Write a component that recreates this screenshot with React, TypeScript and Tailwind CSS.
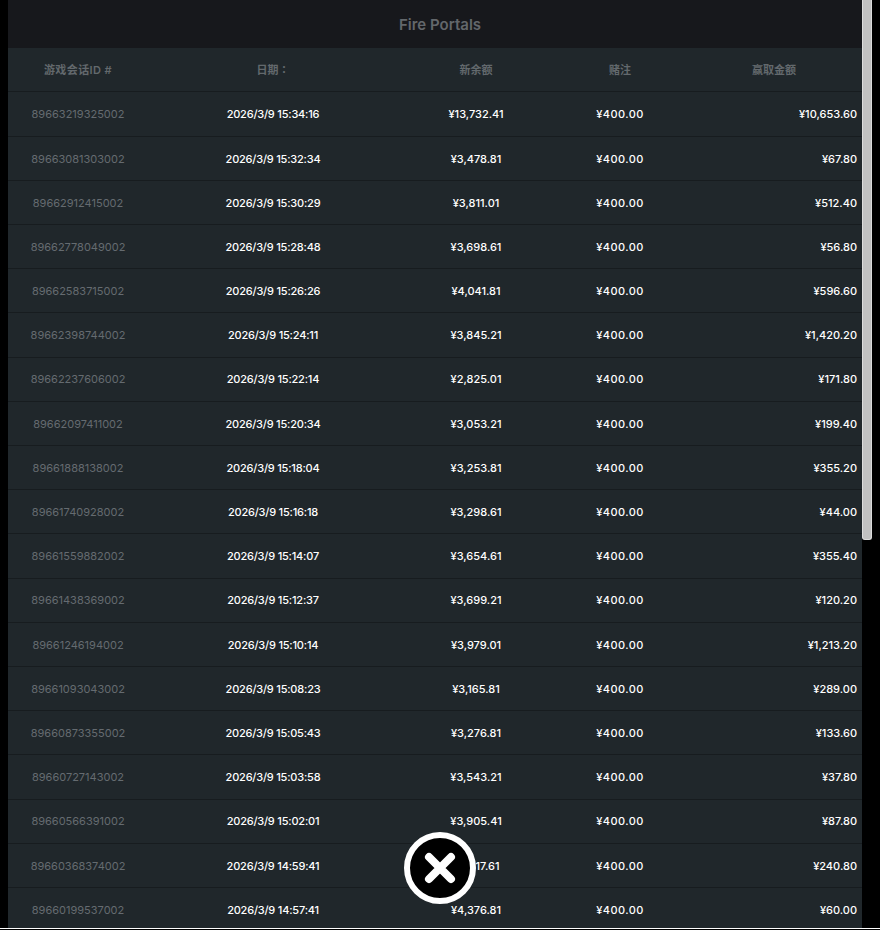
import { useMemo } from "react";

const rows = [
  ["89663219325002", "2026/3/9 15:34:16", "¥13,732.41", "¥400.00", "¥10,653.60"],
  ["89663081303002", "2026/3/9 15:32:34", "¥3,478.81", "¥400.00", "¥67.80"],
  ["89662912415002", "2026/3/9 15:30:29", "¥3,811.01", "¥400.00", "¥512.40"],
  ["89662778049002", "2026/3/9 15:28:48", "¥3,698.61", "¥400.00", "¥56.80"],
  ["89662583715002", "2026/3/9 15:26:26", "¥4,041.81", "¥400.00", "¥596.60"],
  ["89662398744002", "2026/3/9 15:24:11", "¥3,845.21", "¥400.00", "¥1,420.20"],
  ["89662237606002", "2026/3/9 15:22:14", "¥2,825.01", "¥400.00", "¥171.80"],
  ["89662097411002", "2026/3/9 15:20:34", "¥3,053.21", "¥400.00", "¥199.40"],
  ["89661888138002", "2026/3/9 15:18:04", "¥3,253.81", "¥400.00", "¥355.20"],
  ["89661740928002", "2026/3/9 15:16:18", "¥3,298.61", "¥400.00", "¥44.00"],
  ["89661559882002", "2026/3/9 15:14:07", "¥3,654.61", "¥400.00", "¥355.40"],
  ["89661438369002", "2026/3/9 15:12:37", "¥3,699.21", "¥400.00", "¥120.20"],
  ["89661246194002", "2026/3/9 15:10:14", "¥3,979.01", "¥400.00", "¥1,213.20"],
  ["89661093043002", "2026/3/9 15:08:23", "¥3,165.81", "¥400.00", "¥289.00"],
  ["89660873355002", "2026/3/9 15:05:43", "¥3,276.81", "¥400.00", "¥133.60"],
  ["89660727143002", "2026/3/9 15:03:58", "¥3,543.21", "¥400.00", "¥37.80"],
  ["89660566391002", "2026/3/9 15:02:01", "¥3,905.41", "¥400.00", "¥87.80"],
  ["89660368374002", "2026/3/9 14:59:41", "¥3,917.61", "¥400.00", "¥240.80"],
  ["89660199537002", "2026/3/9 14:57:41", "¥4,376.81", "¥400.00", "¥60.00"],
];

const gridCols = "grid grid-cols-[140px_250px_156px_132px_176px]";

const App = () => {
  const data = useMemo(() => rows, []);

  return (
    <div className="relative h-[930px] w-[880px] overflow-hidden bg-black font-['Inter','Noto_Sans_CJK_SC',sans-serif]">
      <div className="flex h-[928px] pl-2">
        <div className="w-[854px] overflow-hidden bg-[#20272b]">
          <div className="flex h-12 items-center justify-center bg-[#17181c] pl-[10px] pt-[3px] text-[15px] font-semibold text-[#63676b]">
            Fire Portals
          </div>
          <div className={`${gridCols} h-11 items-center border-b border-[#171c1f] pt-px text-center text-[11px] font-semibold text-[#63696d]`}>
            <div className="tracking-[0.4px]">游戏会话ID #</div>
            <div className="font-['Inter','Noto_Sans_CJK_TC',sans-serif]">日期：</div>
            <div>新余额</div>
            <div>赌注</div>
            <div>赢取金额</div>
          </div>
          {data.map((r, i) => (
            <div
              key={r[0]}
              className={`${gridCols} ${i === 0 ? "h-[44.7px]" : "h-[44.2px]"} items-center border-b border-[#171c1f] pt-px text-center text-[11px] font-medium text-white`}
            >
              <div className="font-normal text-[#656b70]">{r[0]}</div>
              <div className="tracking-[-0.2px]">{r[1]}</div>
              <div>{r[2]}</div>
              <div className="tracking-[0.4px]">{r[3]}</div>
              <div className="pr-[5px] text-right">{r[4]}</div>
            </div>
          ))}
        </div>
        <div className="w-[10px]">
          <div className="h-[540px] rounded-b-[3px] border-x border-b border-[#dcdcdc] bg-[#c1c1c1]" />
        </div>
      </div>
      <div className="h-px bg-white" />
      <button className="absolute left-[404px] top-[832px] flex h-[72px] w-[72px] items-center justify-center rounded-full border-[6px] border-white bg-black">
        <svg width="34" height="34" viewBox="0 0 34 34" fill="none">
          <path d="M6 6 L28 28 M28 6 L6 28" stroke="#fff" strokeWidth="8" strokeLinecap="round" />
        </svg>
      </button>
    </div>
  );
};

export default App;
